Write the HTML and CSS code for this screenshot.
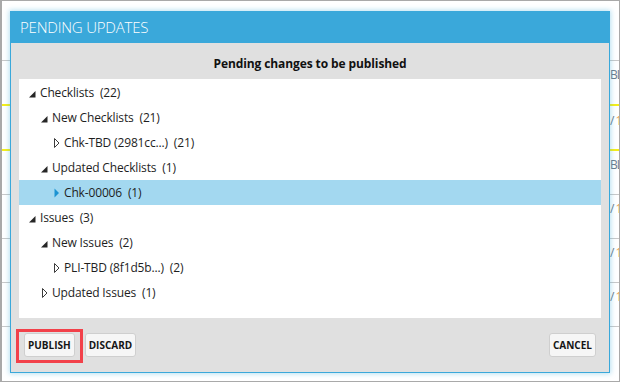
FILE: index.html
```html
<!DOCTYPE html>
<html lang="en">
<head>
    <meta charset="UTF-8">
    <meta name="viewport" content="width=device-width, initial-scale=1.0">
    <title>Pending updates</title>
    <link rel="stylesheet" href="styles.css">
</head>
<body>
    <div class="screen">
        <!-- tabela da aplicação por trás do diálogo -->
        <div class="app">
            <div class="app-head"></div>
            <div class="app-row mark-bottom"><span class="cell-end">BL</span></div>
            <div class="app-row mark-bottom"><span class="cell-end low">/ <b>1</b></span></div>
            <div class="app-row"><span class="cell-end">BL</span></div>
            <div class="app-row"><span class="cell-end">/ <b>1</b></span></div>
            <div class="app-row"><span class="cell-end">/ <b>1</b></span></div>
            <div class="app-row"><span class="cell-end">/ <b>1</b></span></div>
        </div>

        <div class="dialog">
            <div class="dialog-header">PENDING UPDATES</div>
            <div class="dialog-body">
                <h1 class="dialog-title">Pending changes to be published</h1>
                <div class="tree">
                    <div class="tree-row lvl0">
                        <svg class="toggle" viewBox="0 0 16 16"><path d="M11.5 6 L11.5 12.5 L5 12.5 Z" fill="#262626"/></svg>
                        <span class="label">Checklists  (22)</span>
                    </div>
                    <div class="tree-row lvl1">
                        <svg class="toggle" viewBox="0 0 16 16"><path d="M11.5 6 L11.5 12.5 L5 12.5 Z" fill="#262626"/></svg>
                        <span class="label">New Checklists  (21)</span>
                    </div>
                    <div class="tree-row lvl2">
                        <svg class="toggle" viewBox="0 0 16 16"><path d="M6.5 3.5 L11 8 L6.5 12.5 Z" fill="#fff" stroke="#3c3c3c" stroke-width="1"/></svg>
                        <span class="label">Chk-TBD (2981cc...)  (21)</span>
                    </div>
                    <div class="tree-row lvl1">
                        <svg class="toggle" viewBox="0 0 16 16"><path d="M11.5 6 L11.5 12.5 L5 12.5 Z" fill="#262626"/></svg>
                        <span class="label">Updated Checklists  (1)</span>
                    </div>
                    <div class="tree-row lvl2 selected">
                        <svg class="toggle" viewBox="0 0 16 16"><path d="M6.5 3.5 L11 8 L6.5 12.5 Z" fill="#1c93d2"/></svg>
                        <span class="label">Chk-00006  (1)</span>
                    </div>
                    <div class="tree-row lvl0">
                        <svg class="toggle" viewBox="0 0 16 16"><path d="M11.5 6 L11.5 12.5 L5 12.5 Z" fill="#262626"/></svg>
                        <span class="label">Issues  (3)</span>
                    </div>
                    <div class="tree-row lvl1">
                        <svg class="toggle" viewBox="0 0 16 16"><path d="M11.5 6 L11.5 12.5 L5 12.5 Z" fill="#262626"/></svg>
                        <span class="label">New Issues  (2)</span>
                    </div>
                    <div class="tree-row lvl2">
                        <svg class="toggle" viewBox="0 0 16 16"><path d="M6.5 3.5 L11 8 L6.5 12.5 Z" fill="#fff" stroke="#3c3c3c" stroke-width="1"/></svg>
                        <span class="label">PLI-TBD (8f1d5b...)  (2)</span>
                    </div>
                    <div class="tree-row lvl1">
                        <svg class="toggle" viewBox="0 0 16 16"><path d="M6.5 3.5 L11 8 L6.5 12.5 Z" fill="#fff" stroke="#3c3c3c" stroke-width="1"/></svg>
                        <span class="label">Updated Issues  (1)</span>
                    </div>
                </div>
                <div class="dialog-footer">
                    <span class="highlight"><button class="btn">Publish</button></span>
                    <button class="btn">Discard</button>
                    <button class="btn btn-right">Cancel</button>
                </div>
            </div>
        </div>
    </div>
</body>
</html>
```

FILE: styles.css
```css
body {
    margin: 0;
    background: #fff;
    font-family: "Open Sans", "Noto Sans", sans-serif;
}
.screen {
    position: relative;
    width: 620px;
    height: 382px;
    box-sizing: border-box;
    border: 1px solid #a9a9a9;
    border-left-width: 2px;
    overflow: hidden;
    background: #fff;
}

/* fundo */
.app-head {
    height: 59px;
    border-bottom: 1px solid #c8c8c8;
}
.app-row {
    height: 43px;
    border-bottom: 1px solid #c8c8c8;
    display: flex;
    justify-content: flex-end;
    align-items: flex-start;
}
.app-row.mark-bottom {
    border-bottom: 2px solid #f5ee1a;
}
.cell-end {
    width: 9px;
    white-space: nowrap;
    padding-top: 5px;
    font-size: 12px;
    letter-spacing: -1px;
    color: #6b7b8c;
}
.cell-end.low {
    padding-top: 6px;
}
.cell-end b {
    font-weight: normal;
    color: #e8a060;
}

/* diálogo */
.dialog {
    position: absolute;
    left: 8px;
    top: 10px;
    width: 600px;
    height: 362px;
    box-sizing: border-box;
    border: 1px solid #3aa8da;
    box-shadow: 0 0 5px 1px rgba(58, 168, 218, 0.35);
    display: flex;
    flex-direction: column;
    background: #e0e0e0;
}
.dialog-header {
    height: 31px;
    background: #3aa8da;
    color: #fff;
    font-weight: 300;
    font-size: 15px;
    line-height: 31px;
    padding-left: 9px;
    letter-spacing: -0.2px;
}
.dialog-body {
    flex: 1;
    display: flex;
    flex-direction: column;
}
.dialog-title {
    margin: 0;
    padding: 11px 0 5px;
    height: 20px;
    line-height: 20px;
    text-align: center;
    font-size: 12px;
    font-weight: bold;
    letter-spacing: -0.1px;
    color: #111;
}
.tree {
    margin: 0 8px;
    height: 238px;
    padding-top: 1px;
    background: #fff;
}
.tree-row {
    height: 25px;
    display: flex;
    align-items: center;
    font-size: 12px;
    color: #1e1e1e;
}
.tree-row.lvl0 { padding-left: 5px; }
.tree-row.lvl1 { padding-left: 17px; }
.tree-row.lvl2 { padding-left: 29px; }
.tree-row.selected {
    background: #a3d8f0;
}
.toggle {
    width: 16px;
    height: 16px;
    flex: none;
}
.label {
    white-space: pre;
    letter-spacing: -0.15px;
}

.dialog-footer {
    flex: 1;
    display: flex;
    align-items: flex-start;
    gap: 10px;
    padding: 15px 13px 0;
}
.btn {
    height: 24px;
    padding: 0 3px;
    background: #f6f6f6;
    border: 1px solid #cfcfcf;
    border-radius: 3px;
    font-family: "Open Sans", "Noto Sans", sans-serif;
    font-size: 10px;
    font-weight: bold;
    text-transform: uppercase;
    color: #151515;
}
.btn-right {
    margin-left: auto;
}
.highlight {
    position: relative;
    display: flex;
}
.highlight::after {
    content: "";
    position: absolute;
    left: -8px;
    right: -8px;
    top: -4px;
    bottom: -6px;
    border: 3px solid #f2414a;
}
```
